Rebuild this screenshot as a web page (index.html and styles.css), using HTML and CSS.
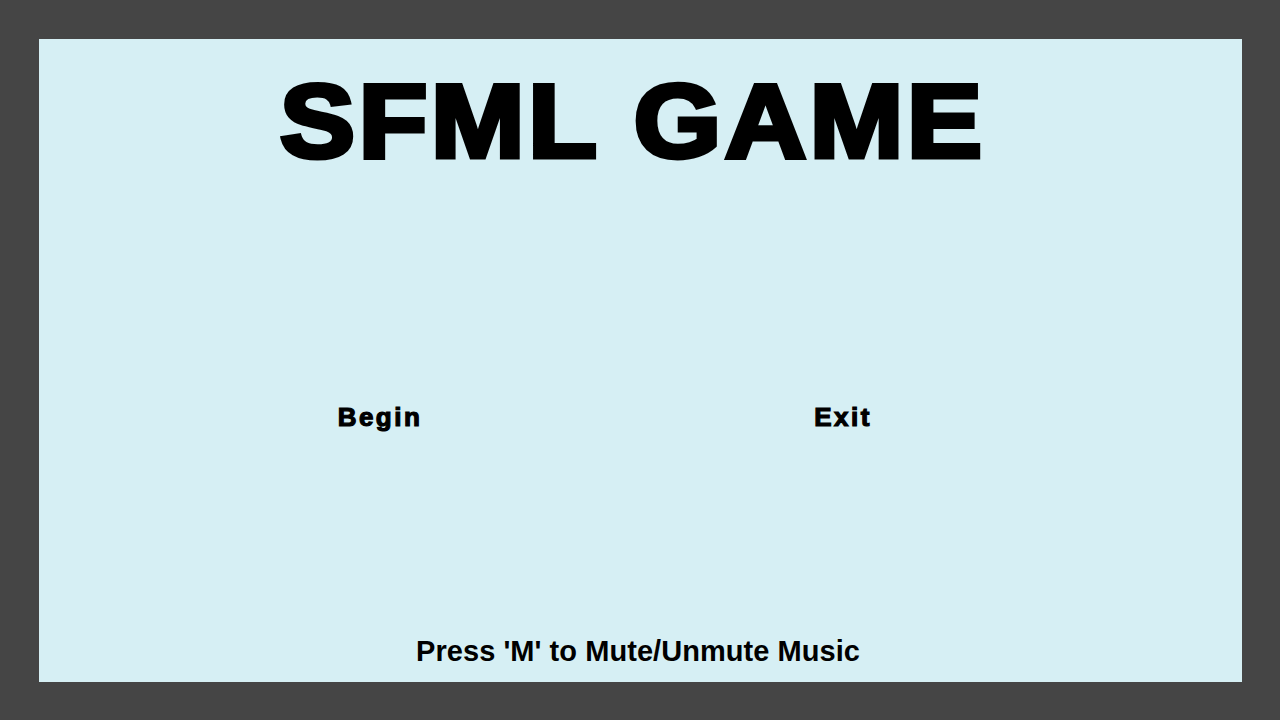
FILE: index.html
```html
<!DOCTYPE html>
<html lang="en">
<head>
<meta charset="utf-8">
<title>SFML GAME</title>
<link rel="stylesheet" href="styles.css">
</head>
<body>
<main class="screen">
  <h1 class="title">SFML GAME</h1>
  <nav class="menu">
    <div class="menu-item">Begin</div>
    <div class="menu-item">Exit</div>
  </nav>
  <p class="hint">Press 'M' to Mute/Unmute Music</p>
</main>
</body>
</html>
```
FILE: styles.css
```css
html, body {
  margin: 0;
  padding: 0;
  background: #454545;
}
body {
  width: 1280px;
  height: 720px;
  padding: 39px 38px 38px 39px;
  box-sizing: border-box;
}
.screen {
  width: 1203px;
  height: 643px;
  background: #d6eff4;
  display: flex;
  flex-direction: column;
  align-items: stretch;
  padding-top: 28px;
  box-sizing: border-box;
  color: #000;
  font-family: "Liberation Sans", Arial, sans-serif;
}
.title {
  margin: 0;
  font-size: 103px;
  line-height: 109px;
  font-weight: 700;
  letter-spacing: 3.5px;
  -webkit-text-stroke: 5px #000;
  text-align: center;
  padding-right: 14px;
  transform: scaleX(1.09);
}
.menu {
  display: flex;
  margin-top: 228px;
  padding-left: 241px;
  gap: 263px;
}
.menu-item {
  width: 200px;
  text-align: center;
  font-size: 26px;
  line-height: 26px;
  font-weight: 700;
  letter-spacing: 2.5px;
  -webkit-text-stroke: 1.2px #000;
}
.hint {
  margin: auto 0 0 0;
  padding-bottom: 16px;
  font-size: 29px;
  line-height: 29px;
  font-weight: 700;
  letter-spacing: 0.05px;
  text-align: center;
  padding-right: 5px;
}
```
